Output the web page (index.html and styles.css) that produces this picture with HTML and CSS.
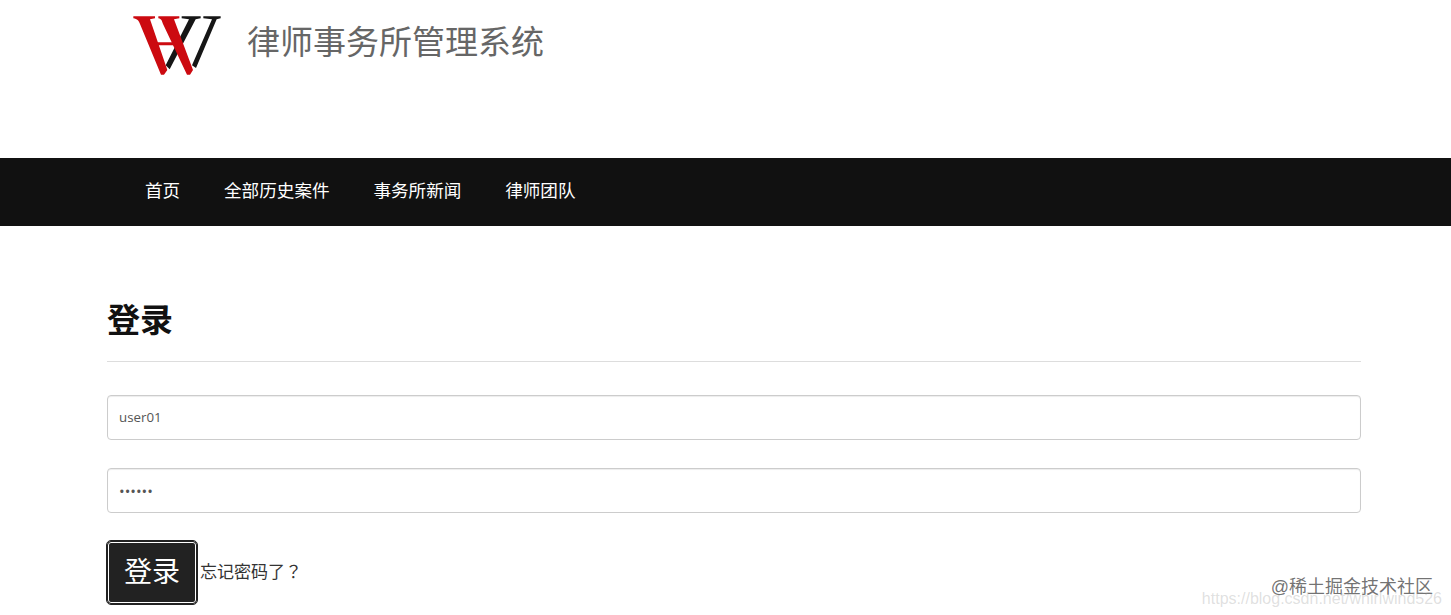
FILE: index.html
```html
<!DOCTYPE html>
<html lang="zh-CN">
<head>
    <meta charset="UTF-8">
    <meta name="viewport" content="width=device-width, initial-scale=1.0">
    <title>律师事务所管理系统 - 登录</title>
    <link rel="stylesheet" href="styles.css">
</head>
<body>
    <header class="site-header">
        <svg class="logo" width="94" height="66" viewBox="0 0 282 198">
            <g fill="#161616">
                <path d="M155 13h57v6l-15 3-78 150-12-12 70-138-22-3z"/>
                <path d="M220 13h52v6l-12 3-62 146-12-8 60-138-26-3z"/>
            </g>
            <g fill="#cc0a10">
                <path d="M10 13h65v6l-15 3 52 152-10 14h-9L30 36c-4-10-8-15-20-17z"/>
                <path d="M85 13h63v6l-16 3 57 152-9 14h-9L99 36c-4-10-4-15-14-17z"/>
                <path d="M78 91h56l3 9H81z"/>
            </g>
        </svg>
        <h1 class="site-title">律师事务所管理系统</h1>
    </header>

    <nav class="main-nav">
        <a href="#">首页</a>
        <a href="#">全部历史案件</a>
        <a href="#">事务所新闻</a>
        <a href="#">律师团队</a>
    </nav>

    <main class="content">
        <h2 class="page-title">登录</h2>
        <form class="login-form">
            <input class="field" type="text" value="user01">
            <input class="field field-password" type="password" value="123456">
            <div class="form-actions">
                <button type="submit">登录</button>
                <a href="#" lang="ja">忘记密码了？</a>
            </div>
        </form>
    </main>

    <!-- 图片水印 -->
    <div class="watermark">
        <div class="watermark-main">@稀土掘金技术社区</div>
        <div class="watermark-url">https://blog.csdn.net/whirlwind526</div>
    </div>
</body>
</html>
```

FILE: styles.css
```css
html, body {
    height: 615px;
    overflow: hidden;
}

body {
    margin: 0;
    position: relative;
    background-color: #fff;
    color: #333;
    font-family: "Liberation Sans", "Noto Sans CJK SC", sans-serif;
}

.site-header {
    height: 158px;
    box-sizing: border-box;
    padding: 12px 0 0 130px;
    display: flex;
    align-items: flex-start;
    gap: 23px;
}

.logo {
    flex-shrink: 0;
}

.site-title {
    margin: 11px 0 0;
    font-size: 33px;
    font-weight: 400;
    line-height: 40px;
    color: #666;
}

.main-nav {
    height: 68px;
    box-sizing: border-box;
    padding: 0 0 6px 123px;
    display: flex;
    align-items: center;
    background-color: #111;
}

.main-nav a {
    padding: 0 21.8px 0 22px;
    color: #fff;
    font-size: 17.6px;
    text-decoration: none;
}

.content {
    margin: 0 90px 0 107px;
    padding-top: 73px;
}

.page-title {
    margin: 0;
    padding-bottom: 18px;
    border-bottom: 1px solid #ddd;
    font-size: 33px;
    line-height: 44px;
    color: #111;
}

.login-form {
    padding-top: 33px;
}

.field {
    display: block;
    width: 100%;
    height: 45px;
    box-sizing: border-box;
    margin-bottom: 28px;
    padding: 0 11px 2px;
    border: 1px solid #ccc;
    border-radius: 4px;
    box-shadow: inset 0 1px 1px rgba(0, 0, 0, .075);
    color: #555;
    font-family: "Open Sans", sans-serif;
    font-size: 13.3px;
}

.field-password {
    padding-bottom: 0;
    font-size: 15px;
}

.form-actions {
    display: flex;
    align-items: center;
    gap: 3px;
}

.form-actions button {
    width: 90px;
    height: 63px;
    padding: 0 0 5px;
    background-color: #222;
    border: 1px solid #222;
    border-radius: 4px;
    outline: 1px solid #222;
    box-shadow: inset 0 0 0 1px #fff;
    color: #fff;
    font-family: inherit;
    font-size: 28px;
}

.form-actions a {
    padding-bottom: 5px;
    color: #333;
    font-family: "Noto Sans CJK JP", sans-serif;
    font-size: 17px;
    text-decoration: none;
}

.watermark {
    position: absolute;
    right: 9px;
    bottom: 8px;
    text-align: right;
    white-space: nowrap;
}

.watermark-main {
    margin-right: 9px;
    color: rgba(90, 90, 90, .85);
    font-size: 18px;
    line-height: 22px;
}

.watermark-url {
    margin-top: -8px;
    height: 17px;
    color: rgba(150, 150, 150, .3);
    font-size: 16px;
    line-height: 17px;
}
```
